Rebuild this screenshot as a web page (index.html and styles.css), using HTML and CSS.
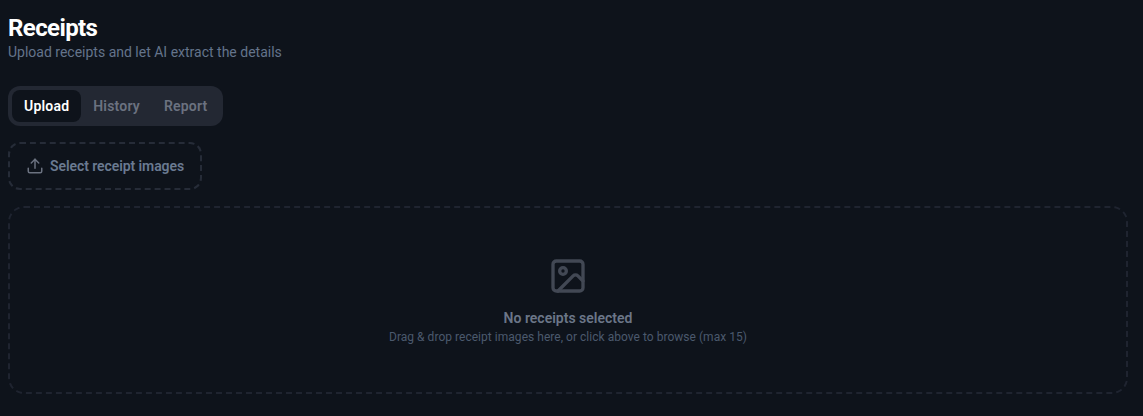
FILE: index.html
```html
<!DOCTYPE html>
<html lang="en">
<head>
  <meta charset="UTF-8">
  <title>Receipts</title>
  <link rel="stylesheet" href="styles.css">
</head>
<body>
  <main class="page">
    <header class="page-header">
      <h1 class="page-title">Receipts</h1>
      <p class="page-subtitle">Upload receipts and let AI extract the details</p>
    </header>

    <nav class="tabs">
      <button class="tab tab-active">Upload</button>
      <button class="tab">History</button>
      <button class="tab">Report</button>
    </nav>

    <button class="select-button">
      <svg class="select-icon" viewBox="0 0 24 24" fill="none" stroke="currentColor" stroke-width="2" stroke-linecap="round" stroke-linejoin="round">
        <path d="M21 15v4a2 2 0 0 1-2 2H5a2 2 0 0 1-2-2v-4"/>
        <path d="M17 8l-5-5-5 5"/>
        <path d="M12 3v12"/>
      </svg>
      Select receipt images
    </button>

    <section class="dropzone">
      <svg class="dropzone-icon" viewBox="0 0 24 24" fill="none" stroke="currentColor" stroke-width="2" stroke-linecap="round" stroke-linejoin="round">
        <rect x="3" y="3" width="18" height="18" rx="2"/>
        <circle cx="9" cy="9" r="2"/>
        <path d="M21 15l-3.086-3.086a2 2 0 0 0-2.828 0L6 21"/>
      </svg>
      <p class="dropzone-title">No receipts selected</p>
      <p class="dropzone-hint">Drag &amp; drop receipt images here, or click above to browse (max 15)</p>
    </section>
  </main>
</body>
</html>
```

FILE: styles.css
```css
* {
  box-sizing: border-box;
}
html,
body {
  height: 100%;
}
body {
  margin: 0;
  background-color: #0e131b;
  color: #fff;
  font-family: Roboto, "Noto Sans", sans-serif;
}
.page {
  padding: 14px 15px 0 8px;
  display: flex;
  flex-direction: column;
  align-items: flex-start;
}

/* header */
.page-header {
  margin-bottom: 24px;
}
.page-title {
  margin: 0;
  font-size: 24px;
  line-height: 28px;
  font-weight: 700;
  letter-spacing: -0.6px;
}
.page-subtitle {
  margin: 0;
  font-size: 14px;
  line-height: 20px;
  color: #64748b;
}

/* tabs */
.tabs {
  display: flex;
  height: 40px;
  padding: 4px;
  border-radius: 12px;
  background-color: #232833;
  margin-bottom: 16px;
}
.tab {
  border: none;
  background: none;
  height: 32px;
  padding: 0 12px;
  border-radius: 8px;
  font-family: inherit;
  font-size: 14px;
  font-weight: 600;
  letter-spacing: 0.2px;
  color: #6b7280;
}
.tab-active {
  background-color: #0e131b;
  color: #fff;
}

/* select button */
.select-button {
  display: flex;
  align-items: center;
  gap: 6px;
  height: 48px;
  padding: 0 16px;
  border: 2px dashed #262c38;
  border-radius: 12px;
  background: none;
  font-family: inherit;
  font-size: 14px;
  font-weight: 600;
  letter-spacing: -0.08px;
  color: #6a7a91;
  margin-bottom: 16px;
}
.select-icon {
  width: 18px;
  height: 18px;
  color: #6b7280;
}

/* empty drop area */
.dropzone {
  width: 100%;
  height: 188px;
  border: 2px dashed #1f2430;
  border-radius: 16px;
  display: flex;
  flex-direction: column;
  align-items: center;
  padding-top: 48px;
}
.dropzone-icon {
  width: 40px;
  height: 40px;
  color: #424854;
  margin-bottom: 12px;
}
.dropzone-title {
  margin: 0 0 1px;
  font-size: 14px;
  line-height: 20px;
  font-weight: 600;
  color: #6b7688;
}
.dropzone-hint {
  margin: 0;
  font-size: 12px;
  line-height: 16px;
  letter-spacing: 0.03px;
  color: #4b596d;
}
```
